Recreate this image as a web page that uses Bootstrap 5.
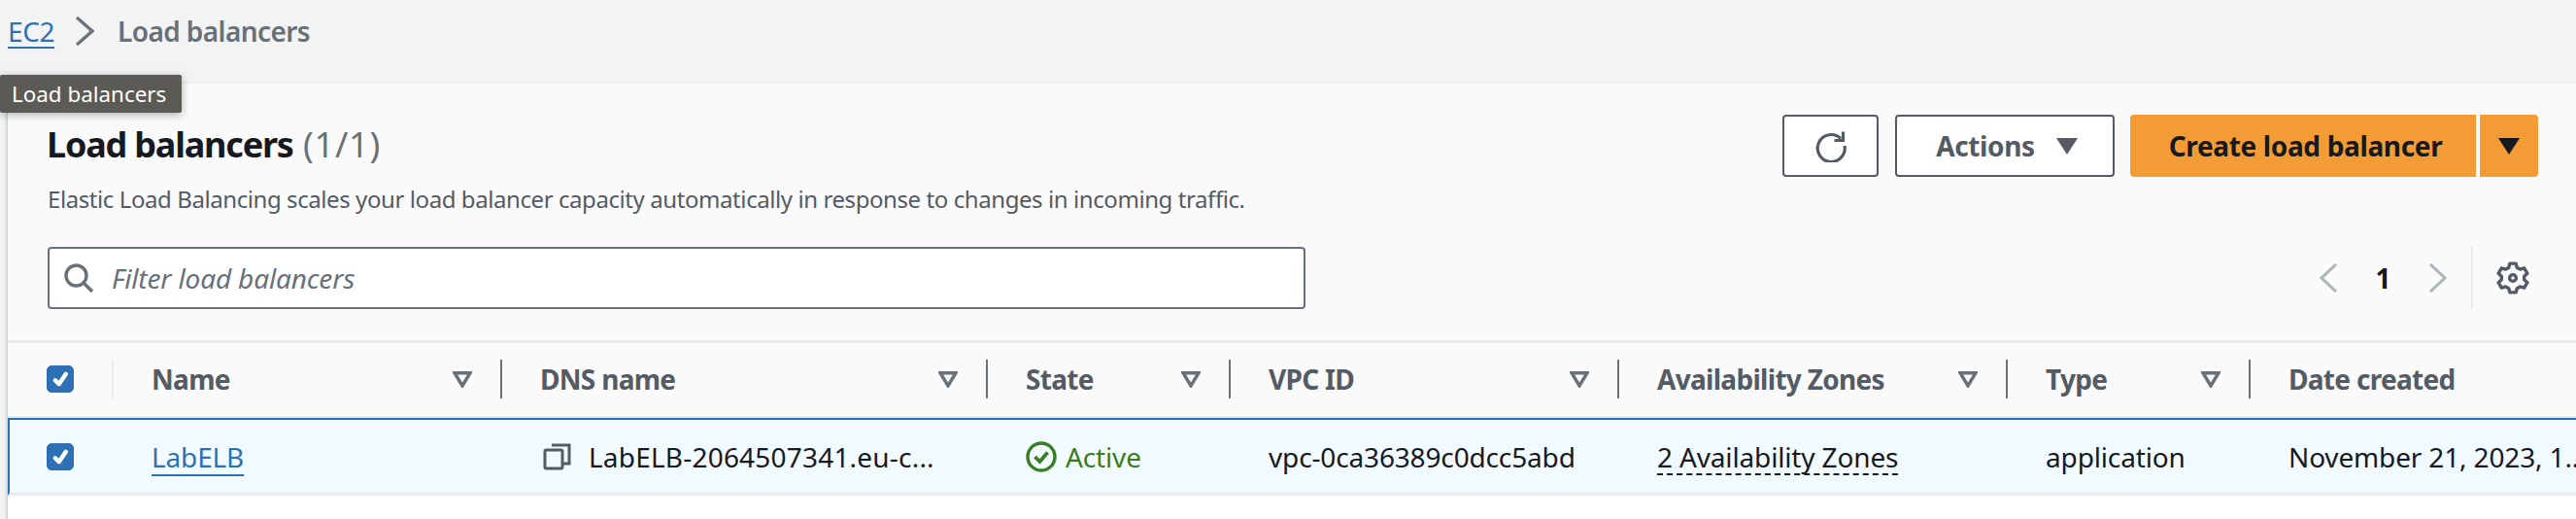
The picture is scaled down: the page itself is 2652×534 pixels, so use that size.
<!DOCTYPE html>
<html lang="en">
<head>
<meta charset="utf-8">
<title>Load balancers</title>
<link rel="stylesheet" href="https://cdn.jsdelivr.net/npm/bootstrap@5.3.0/dist/css/bootstrap.min.css">
<style>
html,body{height:100%;}
body{position:relative;background:#f2f3f3;font-family:"Noto Sans","Open Sans",sans-serif;color:#16191f;overflow:hidden;font-size:28px;}
.crumbs{height:86px;padding:0 0 22px 8px;font-size:28px;letter-spacing:-.4px;gap:21px;}
.crumbs a{color:#2e70b5;text-decoration-thickness:2px;text-underline-offset:5px;}
.crumbs .here{color:#687078;font-weight:600;margin-left:3px;letter-spacing:-.6px;}
.tip{position:absolute;left:0;top:77px;width:187px;height:39px;background:#5b5a55;color:#fff;font-size:22.4px;line-height:39px;padding-left:12px;border-radius:2px;box-shadow:0 2px 8px rgba(0,0,0,.3);z-index:5;}
.sheet{margin-left:6px;border-left:2px solid #d5d8d8;background:#fff;height:calc(100% - 86px);box-shadow:0 0 4px rgba(0,0,0,.08);}
.sheet-head{background:#fafafa;padding:32px 39px 32px 41px;}
.top-row{height:136px;}
.ttl{font-size:36px;line-height:48px;font-weight:700;margin:7px 0 0 -1px;letter-spacing:-1.2px;}
.ttl span{font-weight:400;color:#687078;letter-spacing:.8px;margin-left:2px;}
.sub{font-size:24px;line-height:36px;color:#545b64;margin:14px 0 0;letter-spacing:-.42px;}
.act{height:64px;border-radius:4px;font-size:28px;font-weight:700;letter-spacing:-.35px;padding:0;display:inline-flex;align-items:center;justify-content:center;}
.act-line{background:#fff;border:2px solid #545b64;color:#545b64;}
.act-line:hover{background:#fff;color:#545b64;border-color:#545b64;}
.act-fill{background:#f39c35;border:0;color:#16191f;}
.act-fill:hover{background:#f39c35;color:#16191f;}
.w-refresh{width:99px;margin-right:17px;}
.w-actions{width:226px;gap:22px;margin-right:16px;padding-left:4px;}
.w-create{width:356px;border-radius:4px 0 0 4px;margin-right:4px;padding-left:5px;}
.w-drop{width:60px;border-radius:0 4px 4px 0;}
.filter{width:1295px;height:64px;border:2px solid #687078;border-radius:4px;background:#fff;padding-left:15px;gap:19px;}
.filter input{border:0;background:transparent;box-shadow:none;padding:0;height:56px;font-size:28px;font-style:italic;border-radius:0;letter-spacing:-.15px;}
.filter input::placeholder{color:#687078;}
.filter input:focus{box-shadow:none;background:transparent;}
.pager{height:64px;margin-right:9px;}
.pg-num{font-weight:700;font-size:28px;width:93px;text-align:center;}
.pg-div{width:2px;height:64px;background:#eaeded;margin:0 24px 0 25px;}
.lb-table{table-layout:fixed;width:2644px;margin:0;border-collapse:separate;border-spacing:0;font-size:28px;letter-spacing:-.15px;}
.c0{width:107px}.c1{width:400px}.c2{width:500px}.c3{width:250px}.c4{width:400px}.c5{width:400px}.c6{width:250px}.c7{width:337px}
.lb-table>thead>tr>th{background:#fafafa;padding:17px 0 18px;height:80px;border-top:3px solid #eaeded;border-bottom:2px solid #eaeded;font-weight:700;color:#545b64;box-shadow:none;vertical-align:middle;white-space:nowrap;letter-spacing:-.7px;}
.hcell{height:40px;border-left:2px solid #687078;padding:0 29px 0 39px;}
.hcell.soft{border-left-color:#eaeded;}
.hbox{height:40px;padding-left:40px;}
.lb-table>tbody>tr>td{background:#f1faff;height:80px;padding:0 0 0 41px;border-top:2px solid #2e70b5;border-bottom:3px solid #eaeded;box-shadow:none;vertical-align:middle;white-space:nowrap;overflow:hidden;color:#16191f;}
.lb-table>tbody>tr>td.first{padding-left:38px;border-left:2px solid #2e70b5;}
.lb-table .form-check-input{width:28px;height:28px;margin:0;border-radius:5px;background-color:#2e70b5;border-color:#2e70b5;display:block;background-image:url("data:image/svg+xml,%3csvg xmlns='http://www.w3.org/2000/svg' viewBox='0 0 20 20'%3e%3cpath fill='none' stroke='%23fff' stroke-linecap='round' stroke-linejoin='round' stroke-width='3.4' d='M6 11l3 3 5.5-8'/%3e%3c/svg%3e");}
.lb-table a{color:#2e70b5;text-decoration-thickness:2px;text-underline-offset:7px;}
.copy-cell{gap:18px;padding-left:3px;}
.dns-text{letter-spacing:.2px;}
.ok{color:#3a7d25;gap:9px;}
.dash{border-bottom:2px dashed #16191f;line-height:34px;display:inline-block;}
</style>
</head>
<body>
<nav class="crumbs d-flex align-items-center">
  <a href="#">EC2</a>
  <svg width="20" height="30" viewBox="0 0 20 30" fill="none" stroke="#687078" stroke-width="3.2"><path d="M2 1l16 14L2 29"/></svg>
  <span class="here">Load balancers</span>
</nav>
<div class="tip">Load balancers</div>
<main class="sheet">
  <section class="sheet-head">
    <div class="top-row d-flex justify-content-between align-items-start">
      <div>
        <h1 class="ttl">Load balancers <span>(1/1)</span></h1>
        <p class="sub">Elastic Load Balancing scales your load balancer capacity automatically in response to changes in incoming traffic.</p>
      </div>
      <div class="d-flex">
        <button type="button" class="btn act act-line w-refresh" aria-label="Refresh">
          <svg width="34" height="34" viewBox="0 0 34 34" fill="none" stroke="#545b64" stroke-width="3.2"><path d="M27 9.5A14 14 0 1 0 31 17"/><path d="M29.5 2.5v9h-9"/></svg>
        </button>
        <button type="button" class="btn act act-line w-actions">Actions
          <svg width="22" height="17" viewBox="0 0 22 17"><path d="M0 0h22L11 17z" fill="#545b64"/></svg>
        </button>
        <button type="button" class="btn act act-fill w-create">Create load balancer</button>
        <button type="button" class="btn act act-fill w-drop" aria-label="More">
          <svg width="22" height="17" viewBox="0 0 22 17"><path d="M0 0h22L11 17z" fill="#16191f"/></svg>
        </button>
      </div>
    </div>
    <div class="d-flex justify-content-between align-items-center">
      <div class="filter d-flex align-items-center">
        <svg width="30" height="30" viewBox="0 0 30 30" fill="none" stroke="#687078" stroke-width="3.4" class="flex-shrink-0"><circle cx="12.5" cy="12.5" r="10.5"/><path d="M20 20l9 9"/></svg>
        <input class="form-control" type="text" placeholder="Filter load balancers" aria-label="Filter load balancers">
      </div>
      <div class="pager d-flex align-items-center">
        <svg width="19" height="30" viewBox="0 0 19 30" fill="none" stroke="#aab7b8" stroke-width="3"><path d="M17 1L2 15l15 14"/></svg>
        <span class="pg-num">1</span>
        <svg width="19" height="30" viewBox="0 0 19 30" fill="none" stroke="#aab7b8" stroke-width="3"><path d="M2 1l15 14L2 29"/></svg>
        <span class="pg-div"></span>
        <svg width="34" height="34" viewBox="0 0 16 16" fill="none" stroke="#545b64" stroke-width="1.6" stroke-linejoin="round"><path d="M6.5 1h3l.5 2 1.5.8 2-.6 1.5 2.6-1.5 1.4v1.6l1.5 1.4-1.5 2.6-2-.6-1.5.8-.5 2h-3l-.5-2-1.5-.8-2 .6L1 10.2l1.5-1.4V7.2L1 5.8l1.5-2.6 2 .6L6 3z"/><circle cx="8" cy="8" r="1.6"/></svg>
      </div>
    </div>
  </section>
  <table class="table lb-table">
    <colgroup><col class="c0"><col class="c1"><col class="c2"><col class="c3"><col class="c4"><col class="c5"><col class="c6"><col class="c7"></colgroup>
    <thead>
      <tr>
        <th><div class="hbox d-flex align-items-center"><input class="form-check-input" type="checkbox" checked aria-label="Select all"></div></th>
        <th><div class="hcell soft d-flex align-items-center justify-content-between">Name<svg width="20" height="17" viewBox="0 0 20 17" fill="none" stroke="#687078" stroke-width="3.4"><path d="M2 1.7h16L10 15z"/></svg></div></th>
        <th><div class="hcell d-flex align-items-center justify-content-between">DNS name<svg width="20" height="17" viewBox="0 0 20 17" fill="none" stroke="#687078" stroke-width="3.4"><path d="M2 1.7h16L10 15z"/></svg></div></th>
        <th><div class="hcell d-flex align-items-center justify-content-between">State<svg width="20" height="17" viewBox="0 0 20 17" fill="none" stroke="#687078" stroke-width="3.4"><path d="M2 1.7h16L10 15z"/></svg></div></th>
        <th><div class="hcell d-flex align-items-center justify-content-between">VPC ID<svg width="20" height="17" viewBox="0 0 20 17" fill="none" stroke="#687078" stroke-width="3.4"><path d="M2 1.7h16L10 15z"/></svg></div></th>
        <th><div class="hcell d-flex align-items-center justify-content-between">Availability Zones<svg width="20" height="17" viewBox="0 0 20 17" fill="none" stroke="#687078" stroke-width="3.4"><path d="M2 1.7h16L10 15z"/></svg></div></th>
        <th><div class="hcell d-flex align-items-center justify-content-between">Type<svg width="20" height="17" viewBox="0 0 20 17" fill="none" stroke="#687078" stroke-width="3.4"><path d="M2 1.7h16L10 15z"/></svg></div></th>
        <th><div class="hcell d-flex align-items-center justify-content-between">Date created</div></th>
      </tr>
    </thead>
    <tbody>
      <tr>
        <td class="first"><input class="form-check-input" type="checkbox" checked aria-label="Select LabELB"></td>
        <td><a href="#">LabELB</a></td>
        <td><div class="d-flex align-items-center copy-cell">
          <svg width="29" height="29" viewBox="0 0 29 29" fill="none" stroke="#545b64" stroke-width="3" class="flex-shrink-0"><rect x="2" y="8" width="18" height="19" rx="1.5"/><path d="M9 3h18v19h-7"/></svg>
          <span class="dns-text">LabELB-2064507341.eu-c...</span></div></td>
        <td><div class="ok d-flex align-items-center">
          <svg width="32" height="32" viewBox="0 0 32 32" fill="none" stroke="#3a7d25" stroke-width="3.4"><circle cx="16" cy="16" r="14"/><path d="M9.5 16l5 5 8-9.5" stroke-width="3.8"/></svg>Active</div></td>
        <td>vpc-0ca36389c0dcc5abd</td>
        <td><span class="dash">2 Availability Zones</span></td>
        <td>application</td>
        <td>November 21, 2023, 1...</td>
      </tr>
    </tbody>
  </table>
</main>
<script src="https://cdn.jsdelivr.net/npm/bootstrap@5.3.0/dist/js/bootstrap.bundle.min.js"></script>
</body>
</html>
